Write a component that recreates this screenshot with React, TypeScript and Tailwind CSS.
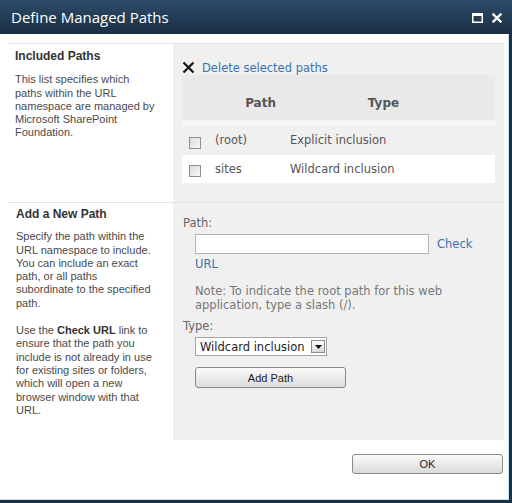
import React from 'react'

const left = "font-['Liberation_Sans',Arial,sans-serif] text-[11px] leading-[13.3px] text-[#4a4a4a]"
const right = "font-['DejaVu_Sans',Verdana,sans-serif] text-[11.5px] leading-[13px]"

function Checkbox() {
  return <span className="block w-[12px] h-[12px] border border-[#8f8f8f] bg-gradient-to-br from-[#dcdcdc] to-[#f7f7f7]" />
}

export default function App() {
  return (
    <div className="w-[512px] h-[503px] flex flex-col bg-white overflow-hidden">
      {/* Title bar */}
      <div className="h-[34px] flex items-center justify-between pl-[11px] pr-[10px] bg-gradient-to-b from-[#2d4b68] to-[#1a2f44]">
        <span className="font-['Open_Sans',sans-serif] text-[15px] text-white">Define Managed Paths</span>
        <div className="flex items-center gap-[9px] pt-[2px]">
          <svg width="11" height="10" viewBox="0 0 11 10">
            <rect x="0.75" y="0.75" width="9.5" height="8.5" fill="none" stroke="#fff" strokeWidth="1.5" />
            <rect x="0" y="0" width="11" height="3" fill="#fff" />
          </svg>
          <svg width="10" height="10" viewBox="0 0 10 10">
            <path d="M1.5 1.5 L8.5 8.5 M8.5 1.5 L1.5 8.5" stroke="#fff" strokeWidth="2.4" strokeLinecap="square" />
          </svg>
        </div>
      </div>

      {/* Body */}
      <div className="flex-1 flex flex-col pt-[9px] pl-[8px] pr-[5px] border-r-[3px] border-b-[3px] border-[#1c3148] shadow-[inset_-1px_-1px_0_#bfe6f0]">
        {/* Section 1 */}
        <div className="flex h-[159px] border-t border-[#dde3e8]">
          <div className={`w-[165px] pl-[7px] pt-[6px] ${left}`}>
            <div className="font-bold text-[12px] text-[#333] mb-[10px]">Included Paths</div>
            <p className="w-[140px]">This list specifies which paths within the URL namespace are managed by Microsoft SharePoint Foundation.</p>
          </div>
          <div className={`flex-1 bg-[#f0f0f0] pl-[9px] pr-[9px] pt-[15px] ${right}`}>
            <div className="flex items-end gap-[7px] h-[16px]">
              <svg width="13" height="13" viewBox="0 0 13 13" className="mb-[1px]">
                <path d="M1.5 1.5 L11.5 11.5 M11.5 1.5 L1.5 11.5" stroke="#111" strokeWidth="2.2" />
              </svg>
              <span className="text-[#3a72ad]">Delete selected paths</span>
            </div>
            <div className="flex h-[45px] bg-[#e9e9e9] items-end pb-[10px] font-bold text-[#555] text-[12px]">
              <span className="w-[112px] text-right pr-[18px]">Path</span>
              <span className="flex-1 text-center pr-[22px]">Type</span>
            </div>
            <div className="h-[6px] bg-[#f6f6f6]" />
            <div className="flex items-center h-[29px] text-[#555]">
              <span className="w-[33px] pl-[7px] pt-[4px]"><Checkbox /></span>
              <span className="w-[75px]">(root)</span>
              <span>Explicit inclusion</span>
            </div>
            <div className="flex items-center h-[28px] bg-white text-[#555]">
              <span className="w-[33px] pl-[7px] pt-[4px]"><Checkbox /></span>
              <span className="w-[75px]">sites</span>
              <span>Wildcard inclusion</span>
            </div>
          </div>
        </div>

        {/* Section 2 */}
        <div className="flex h-[238px] border-t border-[#e4e4e4]">
          <div className={`w-[165px] pl-[8px] pt-[5px] ${left}`}>
            <div className="font-bold text-[12px] text-[#333] mb-[9px]">Add a New Path</div>
            <p className="w-[140px] mb-[14px]">Specify the path within the URL namespace to include. You can include an exact path, or all paths subordinate to the specified path.</p>
            <p className="w-[140px]">Use the <b className="text-[#333]">Check URL</b> link to ensure that the path you include is not already in use for existing sites or folders, which will open a new browser window with that URL.</p>
          </div>
          <div className={`flex-1 bg-[#f0f0f0] pl-[10px] pt-[13px] text-[#666] ${right} leading-[14px]`}>
            <div>Path:</div>
            <div className="pl-[12px] mt-[4px]">
              <div className="flex items-center gap-[8px]">
                <input className="w-[234px] h-[20px] bg-white border border-[#b4b4b4] outline-none" />
                <a className="text-[#3a72ad]">Check</a>
              </div>
              <a className="block text-[#3a72ad] mt-[3px]">URL</a>
              <p className="mt-[13px] text-[#777]">Note: To indicate the root path for this web application, type a slash (/).</p>
            </div>
            <div className="mt-[7px]">Type:</div>
            <div className="pl-[12px] mt-[4px]">
              <div className="flex items-center w-[132px] h-[19px] bg-white border border-[#a5a5a5] pl-[4px] text-[#222]">
                <span className="flex-1 whitespace-nowrap">Wildcard inclusion</span>
                <span className="w-[14px] h-[13px] mr-[1px] border border-[#8d8d8d] bg-gradient-to-b from-[#fafafa] to-[#d8d8d8] flex items-center justify-center">
                  <svg width="7" height="4" viewBox="0 0 7 4"><path d="M0 0 L7 0 L3.5 4 Z" fill="#111" /></svg>
                </span>
              </div>
              <button className="mt-[11px] w-[151px] h-[21px] rounded-[3px] border border-[#8a8a8a] bg-gradient-to-b from-[#fbfbfb] to-[#dcdcdc] font-['Liberation_Sans',Arial,sans-serif] text-[11px] text-[#222]">
                Add Path
              </button>
            </div>
          </div>
        </div>

        {/* Footer */}
        <div className="flex justify-end pt-[14px] pr-[1px]">
          <button className="w-[151px] h-[20px] rounded-[3px] border border-[#8a8a8a] bg-gradient-to-b from-[#fbfbfb] to-[#dadada] font-['Liberation_Sans',Arial,sans-serif] text-[11px] text-[#222]">
            OK
          </button>
        </div>
      </div>
    </div>
  )
}
